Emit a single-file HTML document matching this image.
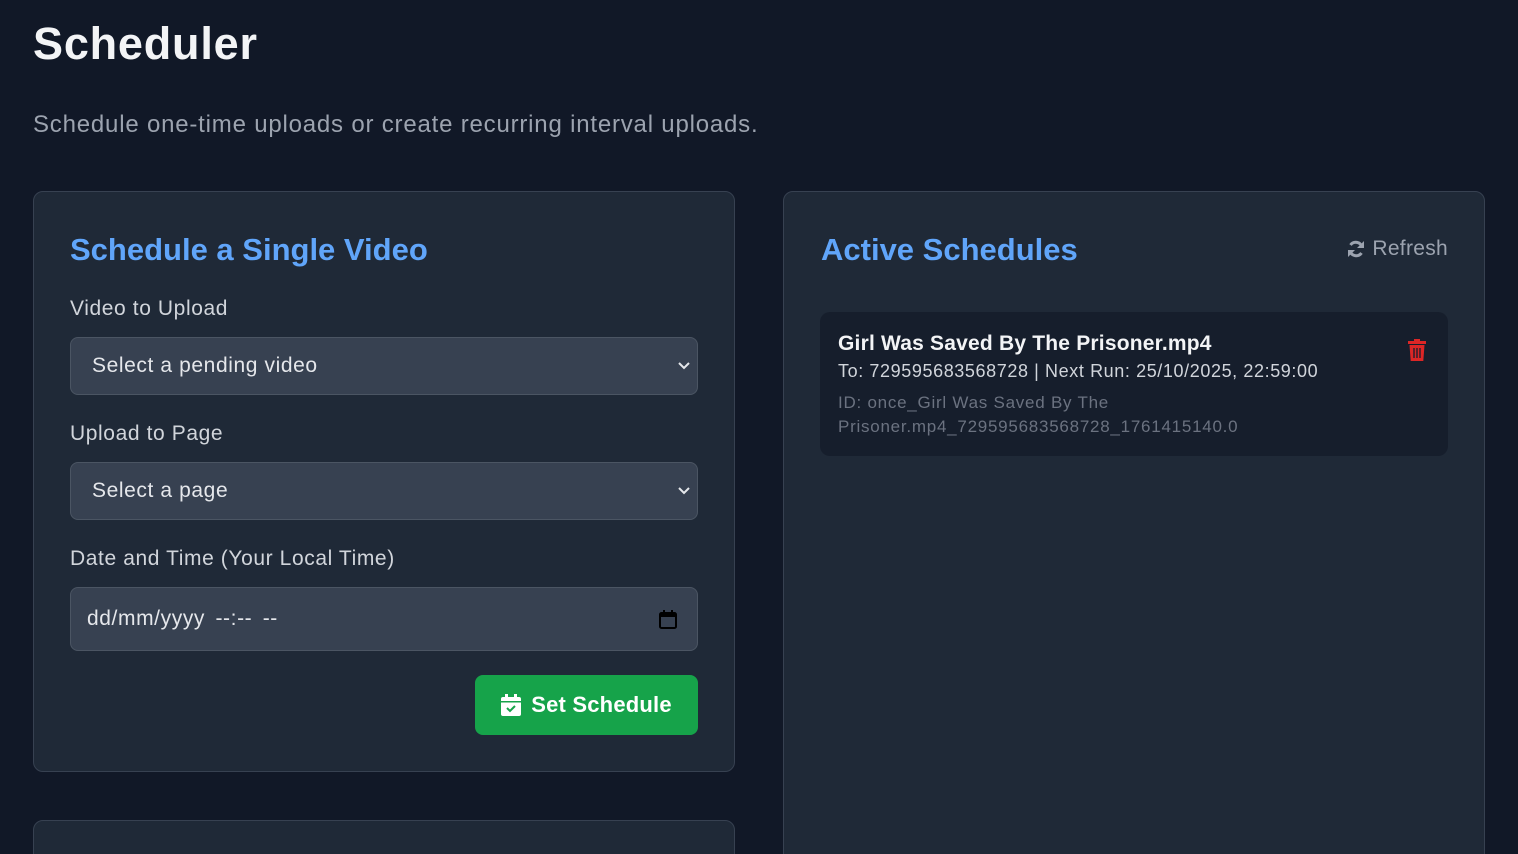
<!DOCTYPE html>
<html><head><meta charset="utf-8"><style>
*{box-sizing:border-box;margin:0;padding:0}
html{width:1518px;height:854px;overflow:hidden;background:#111827}
body{width:1518px;height:854px;overflow:hidden;background:#111827;font-family:"Liberation Sans",sans-serif;color:#e5e7eb;position:relative;letter-spacing:0.6px}
h1{position:absolute;left:33px;top:18px;font-size:45px;font-weight:bold;color:#f3f4f6;letter-spacing:0.8px}
.sub{position:absolute;left:33px;top:111px;font-size:24px;color:#9ca3af;letter-spacing:0.8px}
.card{position:absolute;background:#1f2937;border:1px solid #374151;border-radius:10px}
h2{position:absolute;font-size:31px;font-weight:bold;color:#60a5fa;letter-spacing:0}
.lbl{position:absolute;left:36px;font-size:21px;color:#d1d5db}
.inp{position:absolute;left:36px;width:628px;background:#374151;border:1px solid #4b5563;border-radius:8px;font-size:21px;color:#e5e7eb;padding-left:21px;display:flex;align-items:center}
.chev{position:absolute;right:6px;top:50%;margin-top:-5px}
.btn{position:absolute;left:441px;top:483px;width:223px;height:60px;background:#16a34a;border-radius:8px;color:#fff;font-size:22px;font-weight:bold;display:flex;align-items:center;justify-content:center;gap:10px;letter-spacing:0.2px}
</style></head><body>
<h1>Scheduler</h1>
<div class="sub">Schedule one-time uploads or create recurring interval uploads.</div>
<div class="card" style="left:33px;top:191px;width:702px;height:581px">
<h2 style="left:36px;top:40px">Schedule a Single Video</h2>
<div class="lbl" style="top:105px">Video to Upload</div>
<div class="inp" style="top:145px;height:58px">Select a pending video<svg class="chev" width="14" height="10" viewBox="0 0 14 10"><path d="M2 2l5 5 5-5" stroke="#e5e7eb" stroke-width="2" fill="none"/></svg></div>
<div class="lbl" style="top:230px">Upload to Page</div>
<div class="inp" style="top:270px;height:58px">Select a page<svg class="chev" width="14" height="10" viewBox="0 0 14 10"><path d="M2 2l5 5 5-5" stroke="#e5e7eb" stroke-width="2" fill="none"/></svg></div>
<div class="lbl" style="top:355px">Date and Time (Your Local Time)</div>
<div class="inp" style="top:395px;height:64px;padding-left:16px;word-spacing:4px">dd/mm/yyyy --:-- --<svg style="position:absolute;right:20px;top:22px" width="18" height="20" viewBox="0 0 18 20"><rect x="1" y="3" width="16" height="15" rx="1.5" fill="none" stroke="#000" stroke-width="2"/><rect x="1" y="3" width="16" height="4" fill="#000"/><rect x="4" y="0" width="2" height="4" fill="#000"/><rect x="12" y="0" width="2" height="4" fill="#000"/></svg></div>
<div class="btn"><svg width="20" height="22" viewBox="0 0 20 22"><rect x="0" y="3" width="20" height="19" rx="2" fill="#fff"/><rect x="4" y="0" width="3" height="5" fill="#fff"/><rect x="13" y="0" width="3" height="5" fill="#fff"/><rect x="0" y="7" width="20" height="1.5" fill="#16a34a"/><path d="M6 14l3 3 5-5" stroke="#16a34a" stroke-width="2" fill="none"/></svg>Set Schedule</div>
</div>
<div class="card" style="left:33px;top:820px;width:702px;height:60px"></div>
<div class="card" style="left:783px;top:191px;width:702px;height:700px">
<h2 style="left:37px;top:40px">Active Schedules</h2>
<div style="position:absolute;right:36px;top:45px;font-size:21px;color:#9ca3af;display:flex;align-items:center;gap:6px;letter-spacing:0.3px"><svg width="20" height="20" viewBox="0 0 20 20"><path d="M16 8A6.5 6.5 0 0 0 4.5 6" stroke="#9ca3af" stroke-width="3" fill="none"/><path d="M4 12a6.5 6.5 0 0 0 11.5 2" stroke="#9ca3af" stroke-width="3" fill="none"/><path d="M18 2v7h-7z M2 18v-7h7z" fill="#9ca3af"/></svg>Refresh</div>
<div style="position:absolute;left:36px;top:120px;width:628px;height:144px;background:#161e2c;border-radius:10px">
<div style="position:absolute;left:18px;top:20px;font-size:21px;font-weight:bold;color:#f3f4f6;letter-spacing:0.2px">Girl Was Saved By The Prisoner.mp4</div>
<div style="position:absolute;left:18px;top:49px;font-size:18px;color:#d1d5db">To: 729595683568728 | Next Run: 25/10/2025, 22:59:00</div>
<div style="position:absolute;left:18px;top:79px;font-size:17px;line-height:24px;color:#6b7280;letter-spacing:0.75px">ID: once_Girl Was Saved By The<br>Prisoner.mp4_729595683568728_1761415140.0</div>
<svg style="position:absolute;right:22px;top:27px" width="18" height="22" viewBox="0 0 18 22"><rect x="0" y="2" width="18" height="3" fill="#dc2626"/><rect x="6" y="0" width="6" height="3" fill="#dc2626"/><path d="M1.5 6h15l-1.2 16H2.7z" fill="#dc2626"/><path d="M6 9v10M9 9v10M12 9v10" stroke="#161e2c" stroke-width="1.3"/></svg>
</div>
</div>
</body></html>
